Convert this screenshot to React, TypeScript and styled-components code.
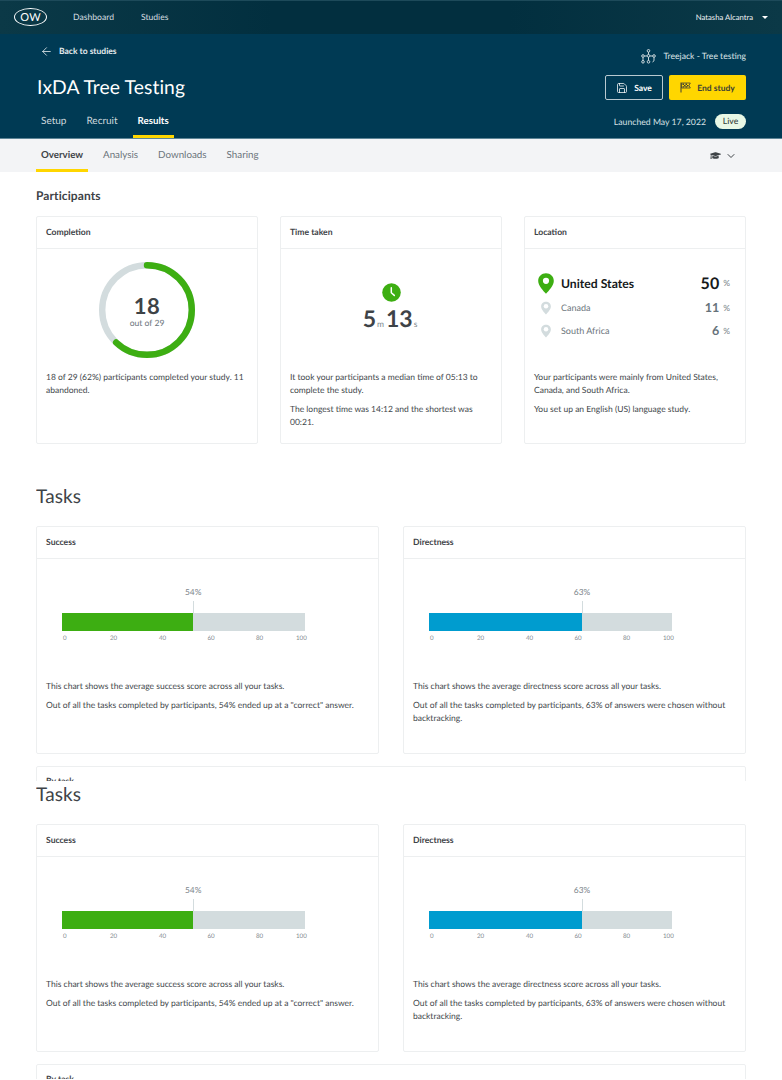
import React from "react";
import styled, { createGlobalStyle } from "styled-components";
import { ArrowLeft, Save, ChevronDown } from "lucide-react";
import { FaGraduationCap } from "react-icons/fa";

const Global = createGlobalStyle`
  html, body { margin: 0; padding: 0; background: #fff; }
  body { font-family: Lato, "Liberation Sans", sans-serif; color: #3e4347; text-rendering: geometricPrecision; -webkit-font-smoothing: antialiased; }
  * { box-sizing: border-box; }
  p { margin: 0; }
`;

const TopBar = styled.div`
  height: 34px; background: linear-gradient(90deg, #0b3947, #022f3f 35%, #022f3f 65%, #0b3947);
  border-top: 1px solid #1d4a5a;
  display: flex; align-items: center; padding: 0 8px 1px 14px; color: #d5dde0; font-size: 8.6px;
`;
const Logo = styled.div`
  width: 33px; height: 18px; border: 1.3px solid #fff; border-radius: 50%; color: #fff;
  font-size: 11px; display: flex; align-items: center; justify-content: center; margin-right: 26px; letter-spacing: .2px;
`;
const TopLink = styled.span` margin-right: 27px; `;
const UserName = styled.span` margin-left: auto; color: #f1f4f5; font-size: 7.7px; `;
const Caret = styled.span`
  margin-left: 9px; margin-right: 6px; width: 0; height: 0;
  border-left: 3px solid transparent; border-right: 3px solid transparent; border-top: 3px solid #fff;
`;

const Header = styled.header`
  height: 105px; background: #003a54; border-bottom: 1px solid #5d8597; padding: 0 36px;
  display: flex; flex-direction: column; justify-content: space-between;
`;
const HeaderTop = styled.div` display: flex; justify-content: space-between; `;
const HeaderLeft = styled.div` display: flex; flex-direction: column; `;
const Back = styled.div`
  display: flex; align-items: center; gap: 6px; color: #e4eaed; font-size: 8.5px; font-weight: 700;
  margin: 11px 0 0 4px; height: 12px;
`;
const Title = styled.h1`
  margin: 18px 0 0 1px; font-size: 19.3px; line-height: 26px; font-weight: 400; color: #fff; letter-spacing: .1px;
`;
const HeaderRight = styled.div` display: flex; flex-direction: column; align-items: flex-end; `;
const StudyType = styled.div`
  display: flex; align-items: center; gap: 7px; font-size: 8.6px; color: #dfe6e9; margin-top: 14px; height: 16px;
`;
const Actions = styled.div` display: flex; gap: 6px; margin-top: 11px; `;
const Btn = styled.div<{ $primary?: boolean }>`
  height: 25px; border-radius: 2px; display: flex; align-items: center; justify-content: center; gap: 6px;
  font-size: 8.5px; font-weight: 700;
  width: ${(p) => (p.$primary ? 77 : 58)}px;
  background: ${(p) => (p.$primary ? "#ffd600" : "transparent")};
  color: ${(p) => (p.$primary ? "#3c3f36" : "#fff")};
  border: ${(p) => (p.$primary ? "none" : "1px solid #b9c9d0")};
`;
const HeaderBottom = styled.div` display: flex; justify-content: space-between; align-items: center; `;
const Tabs = styled.nav` display: flex; gap: 10px; `;
const Tab = styled.div<{ $active?: boolean }>`
  padding: 0 5px; height: 28px; line-height: 23px; font-size: ${(p) => (p.$active ? 9.7 : 10)}px;
  color: ${(p) => (p.$active ? "#fff" : "#cfd9de")};
  font-weight: ${(p) => (p.$active ? 700 : 400)};
  border-bottom: 3px solid ${(p) => (p.$active ? "#ffd600" : "transparent")};
`;
const Launch = styled.div` display: flex; align-items: center; gap: 9px; color: #d7e0e4; font-size: 8.7px; margin-bottom: 6px; `;
const LiveBadge = styled.span`
  background: #e8f8e6; color: #34423a; border-radius: 8px; height: 15px; width: 31px; font-weight: 500;
  display: flex; align-items: center; justify-content: center; font-size: 8.6px;
`;

const SubNav = styled.div`
  height: 33px; background: #f3f4f6; padding: 0 36px; display: flex; justify-content: space-between; align-items: flex-end;
`;
const SubTabs = styled.nav` display: flex; gap: 10px; `;
const SubTab = styled.div<{ $active?: boolean }>`
  padding: 0 5px; height: 33px; line-height: 33px; font-size: ${(p) => (p.$active ? 9.7 : 9.8)}px;
  color: ${(p) => (p.$active ? "#3e4347" : "#6c757c")};
  font-weight: ${(p) => (p.$active ? 700 : 400)};
  border-bottom: 3px solid ${(p) => (p.$active ? "#ffd600" : "transparent")};
`;
const Help = styled.div` display: flex; align-items: center; gap: 4px; height: 33px; margin-right: 9px; color: #3e4347; `;

const Main = styled.main` padding: 0 36px; `;
const SectionSmallTitle = styled.h2`
  margin: 0; padding-top: 16px; font-size: 12px; line-height: 15px; font-weight: 700; color: #3e4347; letter-spacing: .1px;
`;
const ThreeCols = styled.div` display: grid; grid-template-columns: repeat(3, 222px); gap: 22px; margin: 13px 0 39px; `;
const Card = styled.section`
  height: 228px; border: 1px solid #edeff0; border-radius: 2px; background: #fff; display: flex; flex-direction: column;
`;
const CardHead = styled.div`
  height: 32px; flex: none; border-bottom: 1px solid #edeff0; padding: 0 9px 2px; display: flex; align-items: center;
  font-size: 8.6px; font-weight: 700; color: #3e4347;
`;
const Stat = styled.div`
  height: 122px; flex: none; display: flex; flex-direction: column; align-items: center; justify-content: center;
`;
const TimeStat = styled.div`
  height: 122px; flex: none; display: flex; flex-direction: column; align-items: center; padding-top: 34px;
`;
const Copy = styled.div`
  padding: 0 9px; display: flex; flex-direction: column; gap: 5.5px; font-size: 8.5px; line-height: 13px; color: #42474b;
`;

const Ring = styled.div` position: relative; width: 96px; height: 96px; `;
const RingText = styled.div`
  position: absolute; inset: 0; padding-top: 3px; display: flex; flex-direction: column; align-items: center; justify-content: center;
`;
const RingNum = styled.div` font-size: 22px; line-height: 20px; font-weight: 700; color: #3e4347; letter-spacing: .5px; `;
const RingSub = styled.div` font-size: 8.6px; line-height: 10px; margin-top: 2px; color: #6c757c; `;

const TimeRow = styled.div` display: flex; align-items: baseline; margin-top: 3px; `;
const TimeNum = styled.span` font-size: 23px; line-height: 26px; font-weight: 700; color: #3e4347; letter-spacing: 0; `;
const TimeUnit = styled.span` font-size: 8.5px; color: #7d868c; margin: 0 2px 0 1px; `;

const LocList = styled.div`
  height: 122px; padding: 21px 15px 0 10px; display: flex; flex-direction: column; flex: none;
`;
const LocRow = styled.div<{ $big?: boolean }>`
  display: flex; align-items: center; height: ${(p) => (p.$big ? 26 : 23)}px;
`;
const PinBox = styled.div` width: 21px; display: flex; justify-content: center; margin-right: 5px; flex: none; `;
const LocName = styled.span<{ $big?: boolean }>`
  flex: 1; font-size: ${(p) => (p.$big ? 12.2 : 9)}px; font-weight: ${(p) => (p.$big ? 700 : 400)};
  color: ${(p) => (p.$big ? "#16191b" : "#6c757c")};
`;
const LocVal = styled.span<{ $big?: boolean }>`
  font-size: ${(p) => (p.$big ? 16 : 12.5)}px; font-weight: 700; color: ${(p) => (p.$big ? "#16191b" : "#66727a")};
`;
const Pct = styled.span` font-size: 8.5px; color: #7d868c; margin-left: 4px; `;

const TasksBlock = styled.section` height: 298px; overflow: hidden; `;
const TasksTitle = styled.h2`
  margin: 0; font-size: 19px; line-height: 28px; font-weight: 400; color: #3e4347; letter-spacing: .1px;
`;
const TwoCols = styled.div` display: grid; grid-template-columns: 343px 343px; gap: 24px; margin-top: 15px; `;
const ChartWrap = styled.div` height: 121px; flex: none; padding: 54px 0 0 25px; `;
const Track = styled.div`
  position: relative; width: 243px; height: 18px; background: #d3dcde; display: flex;
`;
const Fill = styled.div<{ $color: string }>` height: 100%; background: ${(p) => p.$color}; `;
const Marker = styled.div`
  position: absolute; top: -12px; width: 1px; height: 12px; background: #d3dcde;
`;
const MarkerLabel = styled.span`
  position: absolute; top: -26px; width: 40px; transform: translateX(-20px); text-align: center; font-size: 8.4px; line-height: 11px; color: #7d868c;
`;
const Axis = styled.div`
  display: grid; grid-template-columns: 47px 49px 48.5px 48.5px 40px auto; padding-left: 1px; margin-top: 3px;
  font-size: 6.2px; line-height: 9px; color: #858d92;
`;
const ByTask = styled.section`
  height: 60px; margin-top: 12px; border: 1px solid #edeff0; border-radius: 2px;
`;
const ByTaskHead = styled.div`
  padding: 9px 9px 0; font-size: 8.6px; line-height: 11px; font-weight: 700; color: #3e4347;
`;

const Pin = ({ big }: { big?: boolean }) => (
  <svg width={big ? 16 : 10} height={big ? 21 : 14} viewBox="0 0 16 21">
    <path d="M8 0.3C3.6 0.3 0.2 3.6 0.2 7.9c0 4.6 5 9.700 7.800 12.900 2.800-3.200 7.800-8.300 7.800-12.900C15.800 3.600 12.400 0.300 8 0.300z" fill={big ? "#3dae12" : "#d3dcde"} />
    <circle cx="8" cy="7.800" r={big ? 3.100 : 3.600} fill="#fff" />
  </svg>
);

const ClockIcon = () => (
  <svg width="19" height="19" viewBox="0 0 19 19">
    <circle cx="9.500" cy="9.500" r="9.300" fill="#3dae12" />
    <path d="M9.300 4.800v5l3 2.600" fill="none" stroke="#fff" strokeWidth="1.500" strokeLinecap="round" strokeLinejoin="round" />
  </svg>
);

const TreeIcon = () => (
  <svg width="15" height="15" viewBox="0 0 15 15" fill="none" stroke="#dfe6e9" strokeWidth=".9">
    <circle cx="7.500" cy="1.800" r="1.300" />
    <circle cx="7.500" cy="6.800" r="1.300" />
    <circle cx="2" cy="7" r="1.300" />
    <circle cx="13" cy="7" r="1.300" />
    <circle cx="2" cy="12.800" r="1.300" />
    <circle cx="7.500" cy="12.800" r="1.300" />
    <path d="M7.500 3.100v2.400M7.500 8.100v3.400M3.300 7h2.900M9 7h2.700M2 8.300v3.200M13 8.300v3.500l-1.500 1.200" />
  </svg>
);

const FlagIcon = () => (
  <svg width="11" height="11" viewBox="0 0 11 11">
    <path d="M1 .5v10" stroke="#3c3f36" strokeWidth="1" />
    <path d="M1.500 1h8.800L9 3.500 10.300 6H1.500z" fill="#ffd600" stroke="#3c3f36" strokeWidth=".8" />
    <path d="M2.500 1.500h1.500V3H2.500zM5.500 1.500H7V3H5.500zM4 3h1.500v1.500H4zM7 3h1.500v1.500H7zM2.500 4.300h1.500v1.300H2.500zM5.500 4.300H7v1.300H5.500z" fill="#3c3f36" />
  </svg>
);

const CompletionRing = () => {
  const r = 44.800;
  const c = 2 * Math.PI * r;
  return (
    <svg width="96" height="96" viewBox="0 0 96 96">
      <circle cx="48" cy="48" r={r} fill="none" stroke="#d3dcde" strokeWidth="6.400" />
      <circle
        cx="48" cy="48" r={r} fill="none" stroke="#3dae12" strokeWidth="6.400" strokeLinecap="round"
        strokeDasharray={`${c * 0.62} ${c}`} transform="rotate(-90 48 48)"
      />
    </svg>
  );
};

const BarChart = ({ value, color }: { value: number; color: string }) => (
  <ChartWrap>
    <Track>
      <Fill $color={color} style={{ width: `${value}%` }} />
      <Marker style={{ left: `${value}%` }} />
      <MarkerLabel style={{ left: `${value}%` }}>{value}%</MarkerLabel>
    </Track>
    <Axis>
      {[0, 20, 40, 60, 80, 100].map((n) => (
        <span key={n}>{n}</span>
      ))}
    </Axis>
  </ChartWrap>
);

const TaskSection = () => (
  <TasksBlock>
    <TasksTitle>Tasks</TasksTitle>
    <TwoCols>
      <Card>
        <CardHead>Success</CardHead>
        <BarChart value={54} color="#3dae12" />
        <Copy>
          <p>This chart shows the average success score across all your tasks.</p>
          <p>Out of all the tasks completed by participants, 54% ended up at a "correct" answer.</p>
        </Copy>
      </Card>
      <Card>
        <CardHead>Directness</CardHead>
        <BarChart value={63} color="#009ccf" />
        <Copy>
          <p>This chart shows the average directness score across all your tasks.</p>
          <p>Out of all the tasks completed by participants, 63% of answers were chosen without backtracking.</p>
        </Copy>
      </Card>
    </TwoCols>
    <ByTask>
      <ByTaskHead>By task</ByTaskHead>
    </ByTask>
  </TasksBlock>
);

export default function App() {
  return (
    <>
      <Global />
      <TopBar>
        <Logo>OW</Logo>
        <TopLink>Dashboard</TopLink>
        <TopLink>Studies</TopLink>
        <UserName>Natasha Alcantra</UserName>
        <Caret />
      </TopBar>
      <Header>
        <HeaderTop>
          <HeaderLeft>
            <Back>
              <ArrowLeft size={13} strokeWidth={1.500} />
              Back to studies
            </Back>
            <Title>IxDA Tree Testing</Title>
          </HeaderLeft>
          <HeaderRight>
            <StudyType>
              <TreeIcon />
              Treejack - Tree testing
            </StudyType>
            <Actions>
              <Btn>
                <Save size={12} strokeWidth={1.500} />
                Save
              </Btn>
              <Btn $primary>
                <FlagIcon />
                End study
              </Btn>
            </Actions>
          </HeaderRight>
        </HeaderTop>
        <HeaderBottom>
          <Tabs>
            <Tab>Setup</Tab>
            <Tab>Recruit</Tab>
            <Tab $active>Results</Tab>
          </Tabs>
          <Launch>
            Launched May 17, 2022
            <LiveBadge>Live</LiveBadge>
          </Launch>
        </HeaderBottom>
      </Header>
      <SubNav>
        <SubTabs>
          <SubTab $active>Overview</SubTab>
          <SubTab>Analysis</SubTab>
          <SubTab>Downloads</SubTab>
          <SubTab>Sharing</SubTab>
        </SubTabs>
        <Help>
          <FaGraduationCap size={11} />
          <ChevronDown size={12} strokeWidth={2} />
        </Help>
      </SubNav>
      <Main>
        <SectionSmallTitle>Participants</SectionSmallTitle>
        <ThreeCols>
          <Card>
            <CardHead>Completion</CardHead>
            <Stat>
              <Ring>
                <CompletionRing />
                <RingText>
                  <RingNum>18</RingNum>
                  <RingSub>out of 29</RingSub>
                </RingText>
              </Ring>
            </Stat>
            <Copy>
              <p>18 of 29 (62%) participants completed your study. 11 abandoned.</p>
            </Copy>
          </Card>
          <Card>
            <CardHead>Time taken</CardHead>
            <TimeStat>
              <ClockIcon />
              <TimeRow>
                <TimeNum>5</TimeNum>
                <TimeUnit>m</TimeUnit>
                <TimeNum>13</TimeNum>
                <TimeUnit>s</TimeUnit>
              </TimeRow>
            </TimeStat>
            <Copy>
              <p>It took your participants a median time of 05:13 to complete the study.</p>
              <p>The longest time was 14:12 and the shortest was 00:21.</p>
            </Copy>
          </Card>
          <Card>
            <CardHead>Location</CardHead>
            <LocList>
              <LocRow $big>
                <PinBox><Pin big /></PinBox>
                <LocName $big>United States</LocName>
                <LocVal $big>50</LocVal>
                <Pct>%</Pct>
              </LocRow>
              <LocRow>
                <PinBox><Pin /></PinBox>
                <LocName>Canada</LocName>
                <LocVal>11</LocVal>
                <Pct>%</Pct>
              </LocRow>
              <LocRow>
                <PinBox><Pin /></PinBox>
                <LocName>South Africa</LocName>
                <LocVal>6</LocVal>
                <Pct>%</Pct>
              </LocRow>
            </LocList>
            <Copy>
              <p>Your participants were mainly from United States, Canada, and South Africa.</p>
              <p>You set up an English (US) language study.</p>
            </Copy>
          </Card>
        </ThreeCols>
        <TaskSection />
        <TaskSection />
      </Main>
    </>
  );
}
